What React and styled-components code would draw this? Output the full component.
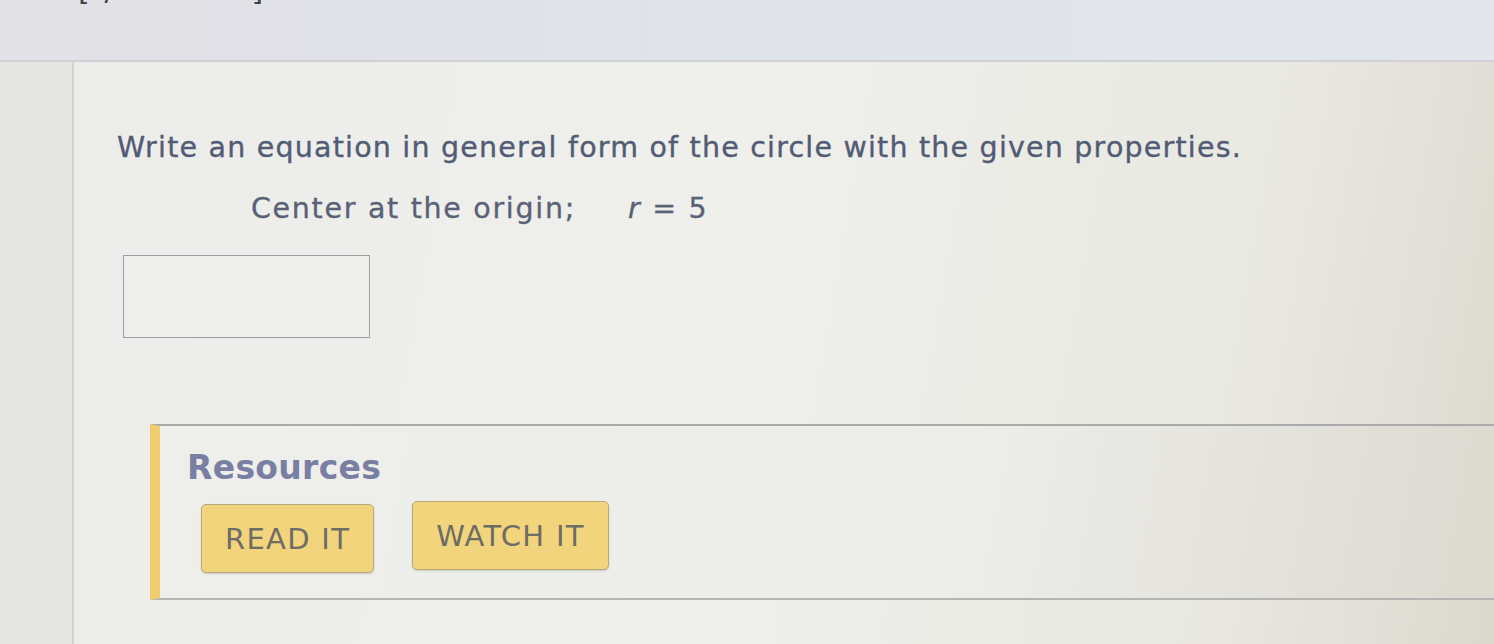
import React from 'react'
import styled, { createGlobalStyle } from 'styled-components'

const GlobalStyle = createGlobalStyle`
  html, body {
    margin: 0;
    padding: 0;
    width: 1494px;
    height: 644px;
    overflow: hidden;
    background: #e4e4e1;
    font-family: "DejaVu Sans", Verdana, sans-serif;
  }
`

const Page = styled.div`
  width: 1494px;
  height: 644px;
  display: flex;
  flex-direction: column;
`

const TopStrip = styled.div`
  height: 60px;
  flex: none;
  overflow: hidden;
  background: linear-gradient(90deg, #e2e1e6 0%, #dfe3ea 50%, #e3e7ed 100%);
  border-bottom: 2px solid #cfd1d4;
  padding-left: 78px;
`

const CutLabel = styled.div`
  margin-top: -27px;
  font-size: 30px;
  line-height: 34px;
  color: #3d4250;
  letter-spacing: 2px;
`

const Body = styled.div`
  flex: 1;
  display: flex;
`

const Gutter = styled.div`
  width: 72px;
  flex: none;
  background: #e6e6e2;
  border-right: 2px solid #d3d4d2;
`

const Panel = styled.div`
  flex: 1;
  background: linear-gradient(100deg, #ececea 0%, #efefec 45%, #e9e9e2 80%, #dcd8cf 100%);
  padding: 69px 0 0 43px;
`

const Prompt = styled.p`
  margin: 0;
  font-size: 28.5px;
  color: #525b74;
  letter-spacing: 1.2px;
  -webkit-text-stroke: 0.35px #525b74;
`

const Given = styled.div`
  margin: 28px 0 0 134px;
  display: flex;
  gap: 52px;
  font-size: 28.5px;
  color: #596176;
  letter-spacing: 1.7px;
  -webkit-text-stroke: 0.3px #596176;
`

const Var = styled.span`
  font-style: italic;
`

const AnswerBox = styled.div`
  margin: 30px 0 0 6px;
  width: 245px;
  height: 81px;
  border: 1.5px solid #9c9fa3;
  background: #eeeeec;
`

const Resources = styled.section`
  box-sizing: border-box;
  margin: 86px 0 0 33px;
  height: 176px;
  border-top: 2px solid #a9aaaa;
  border-bottom: 2px solid #b4b5b3;
  border-left: 10px solid #efcd6c;
  background: linear-gradient(100deg, #eeeeeb 0%, #ededea 60%, #dcd9d0 100%);
  padding: 22px 0 0 27px;
`

const ResTitle = styled.h2`
  margin: 0;
  font-size: 33px;
  font-weight: bold;
  color: #797ea3;
  letter-spacing: 0.3px;
`

const ButtonRow = styled.div`
  display: flex;
  gap: 38px;
  margin: 14px 0 0 14px;
  align-items: flex-start;
`

const ResButton = styled.button`
  height: 69px;
  padding: 0 23px;
  margin-top: ${p => p.$offset || 0}px;
  background: #f2d47c;
  border: 1.5px solid #b9a977;
  border-radius: 5px;
  font-family: "DejaVu Sans", Verdana, sans-serif;
  font-size: 29px;
  letter-spacing: 1.3px;
  color: #6e6c66;
  box-shadow: 0 1px 2px rgba(0, 0, 0, 0.15);
`

export default function App() {
  return (
    <Page>
      <GlobalStyle />
      <TopStrip>
        <CutLabel>[-/1 Points]</CutLabel>
      </TopStrip>
      <Body>
        <Gutter />
        <Panel>
          <Prompt>Write an equation in general form of the circle with the given properties.</Prompt>
          <Given>
            <span>Center at the origin;</span>
            <span><Var>r</Var> = 5</span>
          </Given>
          <AnswerBox />
          <Resources>
            <ResTitle>Resources</ResTitle>
            <ButtonRow>
              <ResButton $offset={3}>READ IT</ResButton>
              <ResButton>WATCH IT</ResButton>
            </ButtonRow>
          </Resources>
        </Panel>
      </Body>
    </Page>
  )
}
